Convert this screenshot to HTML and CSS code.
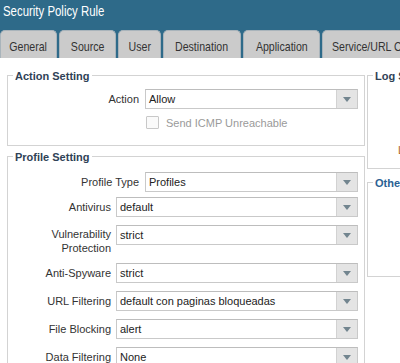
FILE: index.html
```html
<!DOCTYPE html>
<html>
<head>
<meta charset="utf-8">
<link rel="stylesheet" href="styles.css">
</head>
<body>
<div class="dialog">
  <div class="titlebar"><span class="narrow">Security Policy Rule</span></div>
  <div class="tabs">
    <div class="tab tab-general"><span class="narrow">General</span></div>
    <div class="tab tab-source"><span class="narrow">Source</span></div>
    <div class="tab tab-user"><span class="narrow">User</span></div>
    <div class="tab tab-dest"><span class="narrow">Destination</span></div>
    <div class="tab tab-app"><span class="narrow">Application</span></div>
    <div class="tab tab-service"><span class="narrow">Service/URL Category</span></div>
  </div>
  <div class="content">
    <div class="col-left">
      <fieldset class="group action">
        <legend>Action Setting</legend>
        <div class="row row-first">
          <div class="label label-wide">Action</div>
          <div class="select"><span class="value">Allow</span><span class="btn"><i class="tri"></i></span></div>
        </div>
        <div class="row row-check">
          <div class="label label-wide"></div>
          <span class="box"></span><span class="check-label">Send ICMP Unreachable</span>
        </div>
      </fieldset>
      <fieldset class="group profile">
        <legend>Profile Setting</legend>
        <div class="row row-first">
          <div class="label label-wide">Profile Type</div>
          <div class="select"><span class="value">Profiles</span><span class="btn"><i class="tri"></i></span></div>
        </div>
        <div class="row row-tight">
          <div class="label">Antivirus</div>
          <div class="select"><span class="value">default</span><span class="btn"><i class="tri"></i></span></div>
        </div>
        <div class="row">
          <div class="label label-two">Vulnerability<br>Protection</div>
          <div class="select"><span class="value">strict</span><span class="btn"><i class="tri"></i></span></div>
        </div>
        <div class="row">
          <div class="label">Anti-Spyware</div>
          <div class="select"><span class="value">strict</span><span class="btn"><i class="tri"></i></span></div>
        </div>
        <div class="row">
          <div class="label">URL Filtering</div>
          <div class="select"><span class="value">default con paginas bloqueadas</span><span class="btn"><i class="tri"></i></span></div>
        </div>
        <div class="row">
          <div class="label">File Blocking</div>
          <div class="select"><span class="value">alert</span><span class="btn"><i class="tri"></i></span></div>
        </div>
        <div class="row">
          <div class="label">Data Filtering</div>
          <div class="select"><span class="value">None</span><span class="btn"><i class="tri"></i></span></div>
        </div>
      </fieldset>
    </div>
    <div class="col-right">
      <fieldset class="group log">
        <legend>Log Setting</legend>
        <div class="log-body">
          <div class="log-link">Log Forwarding</div>
        </div>
      </fieldset>
      <fieldset class="group other">
        <legend>Other Settings</legend>
        <div class="other-body"></div>
      </fieldset>
    </div>
  </div>
</div>
</body>
</html>
```

FILE: styles.css
```css
html, body {
  margin: 0;
  padding: 0;
}
body {
  width: 400px;
  height: 363px;
  overflow: hidden;
  background: #fff;
  font-family: "Liberation Sans", Arial, sans-serif;
  font-size: 11px;
  color: #333;
}
.dialog {
  width: 400px;
  height: 363px;
  overflow: hidden;
}
.narrow {
  display: inline-block;
  transform: scaleX(0.815);
  white-space: nowrap;
}
.titlebar {
  height: 30px;
  background: #2e6a89;
  color: #fff;
  font-size: 14px;
  line-height: 23px;
  padding-left: 3px;
}
.titlebar .narrow {
  transform-origin: left center;
}
.tabs {
  display: flex;
  gap: 2px;
  height: 28px;
  background: #2e6a89;
  overflow: hidden;
}
.tab {
  box-sizing: border-box;
  flex: none;
  height: 28px;
  padding-top: 3px;
  line-height: 25px;
  font-size: 13px;
  color: #333;
  background: #cbcbcb;
  border: 1px solid #a9b4bb;
  border-bottom: none;
  border-radius: 5px 5px 0 0;
  display: flex;
  justify-content: center;
}
.tab-general { width: 57px; }
.tab-source { width: 57px; }
.tab-user { width: 43px; }
.tab-dest { width: 78px; }
.tab-app { width: 77px; }
.tab-service {
  width: 130px;
  justify-content: flex-start;
  padding-left: 9px;
}
.tab-service .narrow {
  transform-origin: left center;
}
.content {
  display: flex;
  gap: 2px;
  padding-left: 7px;
}
.col-left {
  width: 358px;
  flex: none;
}
.col-right {
  width: 260px;
  flex: none;
}
.group {
  margin: 0;
  padding: 0;
  border: 1px solid #d3d3d3;
  min-width: 0;
}
.group legend {
  margin-left: 5px;
  padding: 2px 2px 0;
  line-height: 12px;
  font-weight: bold;
  font-size: 11px;
  color: #2f4256;
  white-space: nowrap;
}
.other legend {
  color: #2a6193;
}
.action {
  margin-top: 10px;
  padding-bottom: 12px;
}
.profile {
  margin-top: 3px;
  padding-bottom: 10px;
}
.row {
  display: flex;
  align-items: flex-start;
  margin-top: 8px;
  padding-right: 6px;
}
.row-first {
  margin-top: 7px;
}
.profile .row-first {
  margin-top: 9px;
}
.row-tight {
  margin-top: 5px;
}
.label {
  box-sizing: border-box;
  width: 108px;
  flex: none;
  padding-right: 5px;
  padding-top: 3px;
  line-height: 14px;
  text-align: right;
  white-space: nowrap;
}
.label-wide {
  width: 137px;
  padding-right: 6px;
}
.label-two {
  padding-top: 2px;
}
.select {
  flex: 1;
  box-sizing: border-box;
  height: 20px;
  display: flex;
  border: 1px solid #c9c9c9;
  border-top-color: #bdbdbd;
  background: #fff;
}
.value {
  flex: 1;
  padding-left: 3px;
  line-height: 18px;
  color: #222;
  white-space: nowrap;
  overflow: hidden;
}
.btn {
  width: 20px;
  flex: none;
  background: #e4e4e4;
  border-left: 1px solid #d2d2d2;
  display: flex;
  align-items: center;
  justify-content: center;
}
.tri {
  width: 0;
  height: 0;
  border-left: 4px solid transparent;
  border-right: 4px solid transparent;
  border-top: 5px solid #72858f;
}
.row-check {
  margin-top: 3px;
  height: 21px;
  align-items: center;
}
.box {
  box-sizing: border-box;
  width: 13px;
  height: 13px;
  margin-left: 1px;
  border: 1px solid #c8c8c8;
  border-radius: 1px;
  background: #fafafa;
}
.check-label {
  margin-left: 7px;
  color: #9a9a9a;
}
.log {
  margin-top: 10px;
}
.log-body {
  height: 86px;
  box-sizing: border-box;
  padding: 61px 0 0 30px;
}
.log-link {
  color: #b0661a;
  line-height: 14px;
}
.other {
  margin-top: 6px;
}
.other-body {
  height: 87px;
}
```
